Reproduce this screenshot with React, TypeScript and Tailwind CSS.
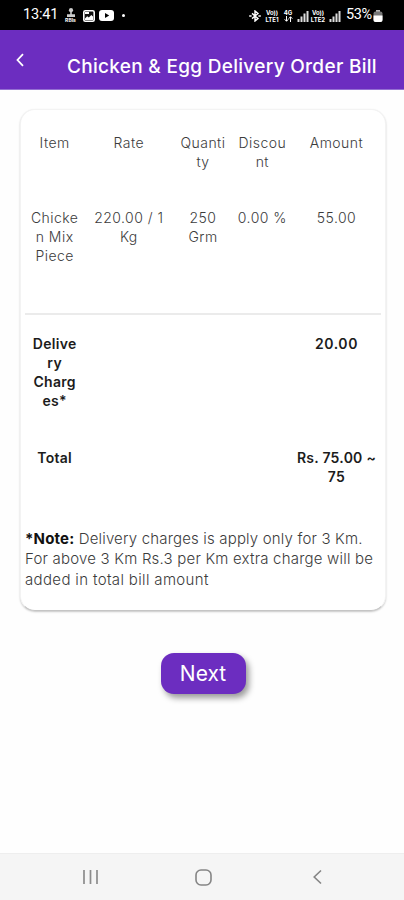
import React from "react";

type Line = { text: string; className?: string };

const header: Line[][] = [
  [{ text: "Item" }],
  [{ text: "Rate" }],
  [{ text: "Quanti" }, { text: "ty" }],
  [{ text: "Discou" }, { text: "nt" }],
  [{ text: "Amount" }],
];

const item: Line[][] = [
  [{ text: "Chicke" }, { text: "n Mix" }, { text: "Piece" }],
  [{ text: "220.00 / 1" }, { text: "Kg" }],
  [{ text: "250" }, { text: "Grm" }],
  [{ text: "0.00 %" }],
  [{ text: "55.00" }],
];

const delivery: Line[][] = [
  [{ text: "Delive" }, { text: "ry" }, { text: "Charg" }, { text: "es*" }],
  [],
  [],
  [],
  [{ text: "20.00", className: "tracking-[0.6px]" }],
];

const total: Line[][] = [
  [{ text: "Total" }],
  [],
  [],
  [],
  [{ text: "Rs. 75.00 ~" }, { text: "75" }],
];

function Row({ cells, className }: { cells: Line[][]; className: string }) {
  return (
    <div className={`grid grid-cols-[2fr_3fr_2fr_2fr_3fr] text-center leading-[19px] ${className}`}>
      {cells.map((lines, i) => (
        <div key={i} className="flex min-w-0 flex-col items-center">
          {lines.map((line) => (
            <span key={line.text} className={`whitespace-nowrap ${line.className ?? ""}`}>
              {line.text}
            </span>
          ))}
        </div>
      ))}
    </div>
  );
}

function Signal() {
  return (
    <svg className="h-3 w-3" viewBox="0 0 12 12" fill="#ddd">
      <rect x="0.5" y="9" width="2" height="3" />
      <rect x="3.5" y="6.5" width="2" height="5.5" />
      <rect x="6.5" y="3.5" width="2" height="8.5" />
      <rect x="9.5" y="1" width="2" height="11" />
    </svg>
  );
}

function Volte({ label }: { label: string }) {
  return (
    <div className="flex w-4 flex-col items-center text-[6px] leading-[7px] font-bold">
      <span>Vo))</span>
      <span>{label}</span>
    </div>
  );
}

function StatusBar() {
  return (
    <div className="flex h-[30px] items-center bg-black pt-px pr-[21px] pl-[23px] text-white">
      <span className="w-[36px] font-[Roboto] text-[14.5px] leading-none tracking-[-0.2px] whitespace-nowrap">13:41</span>
      <div className="ml-1 flex w-[15px] flex-col items-center">
        <svg className="h-[9px] w-2" viewBox="0 0 8 9" fill="#ccc">
          <circle cx="4" cy="2.2" r="2.1" />
          <path d="M3.2 4h1.6v2.2H8V9H0V6.2h3.2z" />
        </svg>
        <span className="text-[5px] leading-[6px] font-bold">RBIs</span>
      </div>
      <svg className="ml-[5px] h-3 w-3" viewBox="0 0 12 12">
        <rect x="0.8" y="0.8" width="10.4" height="10.4" rx="1.5" fill="#111" stroke="#fff" strokeWidth="1.6" />
        <path d="M2 8.5l2.2-2.3L5.8 7.6 8.3 5 10 6.6V10H2zM2 2h4v2H2z" fill="#fff" />
      </svg>
      <svg className="ml-1 h-[11px] w-[15px]" viewBox="0 0 15 11">
        <rect width="15" height="11" rx="3" fill="#fff" />
        <path d="M6 3l4.2 2.5L6 8z" fill="#000" />
      </svg>
      <span className="ml-[8px] h-[3px] w-[3px] rounded-full bg-white" />
      <div className="ml-auto flex items-center">
        <svg className="h-3 w-3" viewBox="0 0 12 12" fill="none" stroke="#fff" strokeWidth="1.4">
          <path d="M3 3.4l6 5L6 11V1l3 2.6-6 5M.2 6h2.4M9.4 6h2.4" />
        </svg>
        <div className="ml-[3px]"><Volte label="LTE1" /></div>
        <div className="ml-[3px] flex w-[10px] flex-col items-center text-[6px] leading-[7px] font-bold">
          <span>4G</span>
          <svg className="h-[6px] w-[9px]" viewBox="0 0 9 6" fill="none" stroke="#fff">
            <path d="M2.5 0v5M.7 3.3l1.8 2 1.8-2M6.5 6V1M4.7 2.7l1.8-2 1.8 2" />
          </svg>
        </div>
        <div className="ml-1"><Signal /></div>
        <div className="ml-px"><Volte label="LTE2" /></div>
        <div className="ml-[3px]"><Signal /></div>
        <span className="ml-[5px] w-[27px] font-[Roboto] text-[14.5px] leading-none tracking-[-0.4px] whitespace-nowrap">53%</span>
        <svg className="h-3 w-[10px]" viewBox="0 0 10 12">
          <rect x="3" width="4" height="2" fill="#bbb" />
          <rect x="0.5" y="1.5" width="9" height="10.5" rx="2" fill="#777" />
          <path d="M.5 5.5h9V10a2 2 0 0 1-2 2h-5a2 2 0 0 1-2-2z" fill="#fff" />
        </svg>
      </div>
    </div>
  );
}

export default function App() {
  return (
    <div className="flex h-[900px] w-[404px] flex-col overflow-hidden bg-[#fefefe] font-[Inter,'Liberation_Sans',sans-serif] text-[#3c3c3c]">
      <StatusBar />
      <header className="flex h-[60px] items-start border-b border-[#9470d2] bg-[#6c2dc0] text-white">
        <svg className="mt-[23px] ml-4 h-[14px] w-2" viewBox="0 0 8 14" fill="none" stroke="#fff" strokeWidth="1.8">
          <path d="M7 1.2L1.5 7 7 12.8" />
        </svg>
        <h1 className="mt-[25px] ml-[43px] text-[19px] leading-6 font-medium tracking-[0.3px] whitespace-nowrap">
          Chicken &amp; Egg Delivery Order Bill
        </h1>
      </header>
      <main className="flex flex-1 flex-col items-center">
        <section className="mt-[19px] ml-[2px] h-[502px] w-[366px] rounded-[15px] border border-[#f3f3f3] border-b-[#c5c5c5] bg-white px-1 shadow-[0_1px_2px_rgba(0,0,0,0.22)]">
          <Row cells={header} className="h-[75px] pt-[23px] text-[14px] font-light tracking-[0.45px]" />
          <Row cells={item} className="h-[130px] border-b-2 border-[#ebebeb] pt-[23px] text-[14px] font-light tracking-[0.45px]" />
          <Row cells={delivery} className="h-[114px] pt-[19px] text-[14px] font-semibold tracking-[0.3px] text-[#1c1c1c]" />
          <Row cells={total} className="h-[100px] pt-[19px] text-[14px] font-semibold tracking-[0.25px] text-[#1c1c1c]" />
          <p className="text-[15px] leading-[20.3px] font-light whitespace-nowrap">
            <span className="block tracking-[0.17px]"><b className="font-bold text-[#111]">*Note:</b> Delivery charges is apply only for 3 Km.</span>
            <span className="block tracking-[0.2px]">For above 3 Km Rs.3 per Km extra charge will be</span>
            <span className="block tracking-[0.35px]">added in total bill amount</span>
          </p>
        </section>
        <button className="mt-[42px] ml-[2px] h-[41px] w-[85px] rounded-[13px] bg-[#6c2dc0] text-[21px] leading-none text-white shadow-[3px_4px_6px_rgba(0,0,0,0.4)]">
          Next
        </button>
      </main>
      <nav className="flex h-[47px] items-center border-t border-[#eeeeee] bg-[#f5f5f5]">
        <svg className="ml-[82px] h-4 w-4" viewBox="0 0 16 16" stroke="#8c8c8c" strokeWidth="1.7">
          <path d="M2 1v14M8.5 1v14M15 1v14" />
        </svg>
        <svg className="ml-[97px] h-[17px] w-[17px]" viewBox="0 0 17 17" fill="none" stroke="#858585" strokeWidth="1.6">
          <rect x="1" y="1" width="15" height="15" rx="5" />
        </svg>
        <svg className="ml-[101px] h-4 w-[9px]" viewBox="0 0 9 16" fill="none" stroke="#858585" strokeWidth="1.6">
          <path d="M8 1.5L1.2 8 8 14.5" />
        </svg>
      </nav>
    </div>
  );
}
